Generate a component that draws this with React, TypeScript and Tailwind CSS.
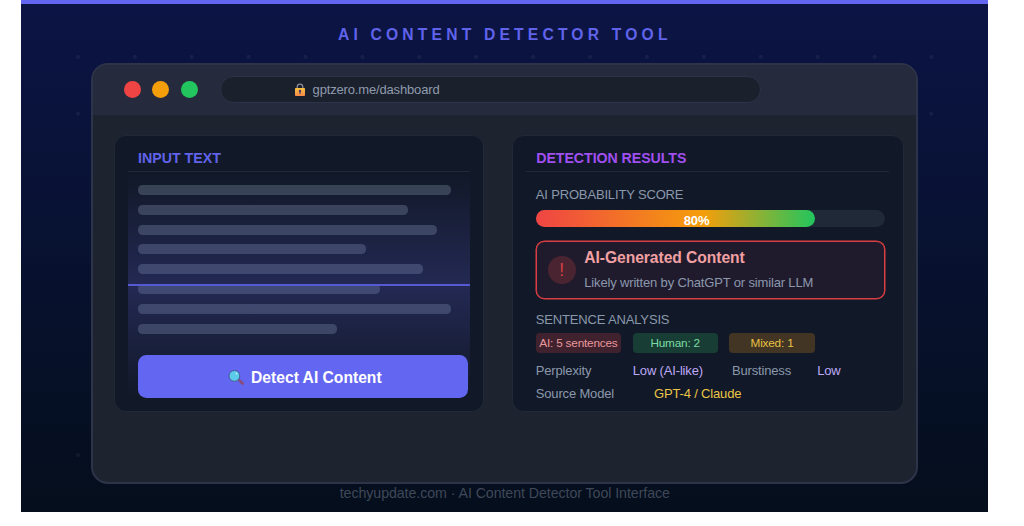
import type { ReactNode } from "react"
import clsx from "clsx"

const textLines = [
  "w-[313px]",
  "w-[270px]",
  "w-[299px]",
  "w-[228px]",
  "w-[285px]",
  "w-[242px]",
  "w-[313px]",
  "w-[199px]",
]

const badges = [
  { label: "AI: 5 sentences", className: "bg-[#40222e] text-[#e8989c]" },
  { label: "Human: 2", className: "bg-[#183d35] text-[#7cdca1]" },
  { label: "Mixed: 1", className: "bg-[#423524] text-[#e6c246]" },
]

const dots = [
  ...Array.from({ length: 16 }, (_, i) => ({ x: 56.9 + i * 56.9, y: 56.9 })),
  { x: 56.9, y: 113.8 },
  { x: 910.2, y: 113.8 },
  { x: 56.9, y: 455.1 },
]

function LockIcon() {
  return (
    <svg width="12" height="14" viewBox="0 0 12 14" fill="none">
      <defs>
        <linearGradient id="lock" x1="0" y1="0" x2="0" y2="1">
          <stop offset="0" stopColor="#f9c23c" />
          <stop offset="1" stopColor="#f5874b" />
        </linearGradient>
      </defs>
      <path d="M3.2 6V3.9a2.8 2.8 0 0 1 5.6 0V6" stroke="#8b8894" strokeWidth="1.3" />
      <rect x="1" y="5" width="10" height="8" rx="0.8" fill="url(#lock)" />
      <circle cx="6" cy="8" r="1.2" fill="#433b6b" />
      <path d="M6 8v3" stroke="#433b6b" strokeWidth="1.1" />
    </svg>
  )
}

function SearchIcon() {
  return (
    <svg width="17" height="17" viewBox="0 0 17 17" fill="none">
      <path d="M10.2 10.2l2 2" stroke="#5a5488" strokeWidth="1.6" />
      <path d="M11.6 11.6l3 2.9" stroke="#8b4b78" strokeWidth="2.7" strokeLinecap="round" />
      <circle cx="6.4" cy="6.9" r="5.4" fill="#5bcbe9" stroke="#465d94" strokeWidth="1" />
      <circle cx="8.6" cy="4.6" r="1" fill="#b5eaf5" />
    </svg>
  )
}

function Panel({ title, titleClass, className, children }: { title: string; titleClass: string; className: string; children: ReactNode }) {
  return (
    <section className={clsx("h-[277px] shrink-0 rounded-[12px] border border-[#1f2937] bg-[#111827] px-[13.2px]", className)}>
      <h2 className={clsx("flex h-[35.5px] items-center border-b border-[#1f2937] pt-[11px] pl-[10px] text-[14.2px] font-bold", titleClass)}>
        {title}
      </h2>
      {children}
    </section>
  )
}

function InputPanel() {
  return (
    <Panel title="INPUT TEXT" titleClass="text-[#6063ea]" className="w-[370px]">
      <div className="relative h-[227px] w-[341.5px] pt-[13.2px] pl-[10px]">
        <div className="flex flex-col gap-[9.92px]">
          {textLines.map((width, i) => (
            <div key={i} className={clsx("h-[10px] rounded-[4.5px] bg-[#374151]", width)} />
          ))}
        </div>
        {/* scanner glow */}
        <div className="absolute inset-0 bg-linear-to-b from-[#6366f1]/0 via-[#6366f1]/22 to-[#6366f1]/0" />
        <div className="absolute inset-x-0 top-[112px] h-[2px] bg-[#5659d4]" />
        <button className="relative mt-[21px] flex h-[43px] w-[330px] items-center rounded-[8.5px] bg-[#6366f1] pt-[2px] pl-[90px] text-[15.64px] font-bold text-white">
          <SearchIcon />
          <span className="ml-[6px]">Detect AI Content</span>
        </button>
      </div>
    </Panel>
  )
}

function ResultsPanel() {
  return (
    <Panel title="DETECTION RESULTS" titleClass="text-[#a04ff0] tracking-[-0.06px]" className="w-[391.5px]">
      <div className="pl-[9.5px] text-[13px] leading-[16px] tracking-[-0.16px] text-[#8b98ac]">
        <div className="pt-[15px]">AI PROBABILITY SCORE</div>
        <div className="mt-[7.5px] h-[17px] w-[349px] rounded-full bg-[#1f2937]">
          <div className="h-full w-4/5 rounded-full bg-[linear-gradient(90deg,#ef4444_0%,#f59e0b_60%,#22c55e_100%)] pt-[3px] pl-[148px] font-bold text-white">
            80%
          </div>
        </div>

        <div className="mt-[13.5px] flex h-[58px] w-[349px] items-center rounded-[8.5px] border border-[#dc3f43] bg-[#201b2c] pl-[10.8px] shadow-[0_0_0_0.5px_#dc3f43]">
          <div className="flex size-[28px] items-center justify-center rounded-full bg-[#4a2431] text-[17.5px] text-[#d94044]">!</div>
          <div className="ml-[8.7px]">
            <div className="text-[15.64px] leading-[20px] font-bold tracking-[-0.05px] text-[#f1a0a3]">AI-Generated Content</div>
            <div className="mt-[6px] leading-[18px]">Likely written by ChatGPT or similar LLM</div>
          </div>
        </div>

        <div className="mt-[13px]">SENTENCE ANALYSIS</div>
        <div className="mt-[5px] flex gap-[11.5px]">
          {badges.map((badge) => (
            <div
              key={badge.label}
              className={clsx(
                "flex h-[20px] w-[85.3px] items-center justify-center rounded-[4px] text-[11.8px] tracking-[-0.2px] whitespace-nowrap",
                badge.className,
              )}
            >
              {badge.label}
            </div>
          ))}
        </div>

        <div className="mt-[10px] flex">
          <span className="w-[97px]">Perplexity</span>
          <span className="w-[99.2px] text-[#bda9f6]">Low (AI-like)</span>
          <span className="w-[85.2px]">Burstiness</span>
          <span className="text-[#bda9f6]">Low</span>
        </div>
        <div className="mt-[7px] flex">
          <span className="w-[118.2px]">Source Model</span>
          <span className="text-[#eac646]">GPT-4 / Claude</span>
        </div>
      </div>
    </Panel>
  )
}

export default function App() {
  return (
    <div className="h-[526px] w-[1024px] overflow-hidden bg-white font-['Liberation_Sans',Arial,sans-serif]">
      <main className="relative ml-[21.3px] flex h-[511.7px] w-[967px] flex-col items-center border-t-4 border-[#6366f1] bg-linear-to-b from-[#0c1445] to-[#050e1c]">
        <svg className="absolute -top-[4px] left-0" width="967" height="512">
          {dots.map((dot, i) => (
            <circle key={i} cx={dot.x} cy={dot.y} r="2.1" fill="#ffffff" fillOpacity="0.05" />
          ))}
        </svg>

        <h1 className="flex h-[59px] shrink-0 items-center pt-[2px] text-[15.64px] font-bold tracking-[4.2px] text-[#6063ea]">
          AI CONTENT DETECTOR TOOL
        </h1>

        <div className="relative h-[421px] w-[827px] shrink-0 overflow-hidden rounded-[17px] border-2 border-[#2d3348] bg-[#1e242f]">
          <div className="flex h-[50px] items-center bg-[#262a3d] pb-[1px] pl-[30.8px]">
            <div className="flex gap-[11.4px]">
              <span className="size-[17px] rounded-full bg-[#ef4444]" />
              <span className="size-[17px] rounded-full bg-[#f59e0b]" />
              <span className="size-[17px] rounded-full bg-[#22c55e]" />
            </div>
            <div className="ml-[22.2px] flex h-[27px] w-[541px] items-center rounded-full border border-[#2d3348] bg-[#1a202c] pl-[73px] text-[13px] tracking-[-0.16px] text-[#8f9bae]">
              <LockIcon />
              <span className="ml-[6.5px]">gptzero.me/dashboard</span>
            </div>
          </div>
          <div className="flex gap-[28.2px] pt-[20px] pl-[20.6px]">
            <InputPanel />
            <ResultsPanel />
          </div>
        </div>

        <footer className="relative text-[14.2px] leading-[18px] tracking-[-0.06px] text-[#3f4858]">
          techyupdate.com · AI Content Detector Tool Interface
        </footer>
      </main>
    </div>
  )
}
